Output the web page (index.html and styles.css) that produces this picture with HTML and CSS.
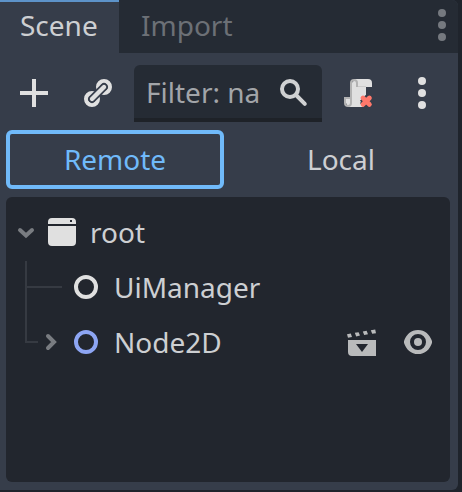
FILE: index.html
```html
<!DOCTYPE html>
<html lang="en">
<head>
<meta charset="utf-8">
<title>Scene dock</title>
<link rel="stylesheet" href="styles.css">
</head>
<body>
<main class="dock">
  <header class="tabs">
    <div class="tab active">Scene</div>
    <div class="tab">Import</div>
    <svg class="tabs-menu" viewBox="0 0 8 32"><circle cx="4" cy="4" r="4"/><circle cx="4" cy="16" r="4"/><circle cx="4" cy="28" r="4"/></svg>
  </header>
  <div class="toolbar">
    <svg class="icon" viewBox="0 0 16 16"><path d="M7 1h2v6h6v2H9v6H7V9H1V7h6z"/></svg>
    <svg class="icon link" viewBox="0 0 16 16"><circle cx="5" cy="11" r="2.900"/><circle cx="11" cy="5" r="2.900"/><path class="gap" d="M5 11l6-6"/><path d="M5 11l6-6"/></svg>
    <div class="filter">
      <span class="filter-text">Filter: na</span>
      <svg class="icon search" viewBox="0 0 16 16"><circle cx="6" cy="6" r="4"/><path d="M9 9l4.400 4.400"/></svg>
    </div>
    <svg class="icon script" viewBox="0 0 16 16"><path d="M6 1v1a1 1 0 0 0-1 1v10H4v-2H2v2l1 2h9V5h3V3a2 2 0 0 0-2-2z"/><path class="fold" d="M6 1a2 2 0 0 0-2 2v7H1v3a2 2 0 1 0 4 0V3a1 1 0 1 1 2 0v2h5V4.700H8V3a2 2 0 0 0-2-2zm-4 10h2v2a1 1 0 1 1-2 0z"/><path class="cut" d="M10.400 10.400l4 4m0-4l-4 4"/><path class="cross" d="M10.500 10.500l3.200 3.200m0-3.200l-3.200 3.200"/></svg>
    <svg class="icon more" viewBox="0 0 16 16"><circle cx="8" cy="2" r="2"/><circle cx="8" cy="8" r="2"/><circle cx="8" cy="14" r="2"/></svg>
  </div>
  <div class="switch">
    <div class="choice selected">Remote</div>
    <div class="choice">Local</div>
  </div>
  <section class="tree">
    <div class="row">
      <svg class="guide" viewBox="0 0 36 55"><path class="arrow" d="M14 25l6 5.500 6-5.500"/></svg>
      <svg class="icon node" viewBox="0 0 16 16"><path d="M3 1h10a2 2 0 0 1 2 2v1H1V3a2 2 0 0 1 2-2zM1 5h14v8a2 2 0 0 1-2 2H3a2 2 0 0 1-2-2z"/><path class="dot" d="M12 2h1v1h-1z"/></svg>
      <span class="name">root</span>
    </div>
    <div class="row">
      <svg class="guide child" viewBox="0 0 60 55"><path class="line" d="M20 1v54M20 27h36"/></svg>
      <svg class="icon node ring" viewBox="0 0 16 16"><circle cx="8" cy="8" r="5"/></svg>
      <span class="name">UiManager</span>
    </div>
    <div class="row">
      <svg class="guide child" viewBox="0 0 60 55"><path class="line" d="M20 0v27h12"/><path class="arrow" d="M42 21l6 6-6 6"/></svg>
      <svg class="icon node ring blue" viewBox="0 0 16 16"><circle cx="8" cy="8" r="5"/></svg>
      <span class="name">Node2D</span>
      <span class="actions">
        <svg class="icon" viewBox="0 0 16 16"><path fill-rule="evenodd" d="M1 7h14v8H3a2 2 0 0 1-2-2zM5 9l3 4 3-4zM.5 4.100l1.900-.3.6 1.700-2 .4zM4.400 3.400l1.900-.3.7 1.700-1.900.4zM8.400 2.700l1.900-.3.7 1.700-1.900.4zM12.400 2.100l2.200-.3.4 1.800-1.900.3z"/></svg>
        <svg class="icon eye" viewBox="0 0 16 16"><path fill-rule="evenodd" d="M8 2C4.500 2 2.100 4.400 1.100 7.300a2 2 0 0 0 0 1.400C2.100 11.600 4.500 14 8 14s5.900-2.400 6.900-5.300a2 2 0 0 0 0-1.400C13.900 4.400 11.500 2 8 2zm0 2a4 4 0 1 1 0 8 4 4 0 0 1 0-8z"/><circle cx="8" cy="8" r="2"/></svg>
      </span>
    </div>
  </section>
</main>
</body>
</html>
```
FILE: styles.css
```css
* { box-sizing: border-box; }

body {
  margin: 0;
  height: 492px;
  overflow: hidden;
  background: #1f242c;
  color: #cdcfd2;
  font: 28px/38px "Noto Sans", sans-serif;
}

svg { display: block; flex: none; }

.dock {
  display: flex;
  flex-direction: column;
  width: 458px;
  height: 490px;
  background: #363d4a;
  border-radius: 0 6px 6px 0;
  overflow: hidden;
}

.tabs {
  display: flex;
  height: 53px;
  background: #252b34;
}

.tab {
  padding: 6px 22px 0;
  color: #6c7076;
}

.tab.active {
  width: 119px;
  padding: 4px 0 0 20px;
  border-top: 2px solid #5d93c9;
  background: #363d4a;
  color: #cdcfd2;
}

.tabs-menu {
  width: 8px;
  height: 32px;
  margin: 9px 12px 0 auto;
  fill: #75797f;
}

.icon {
  width: 32px;
  height: 32px;
  fill: #e0e0e0;
}

.toolbar {
  display: flex;
  align-items: flex-start;
  height: 57px;
  margin-top: 12px;
  padding-left: 18px;
}

.toolbar .icon { margin-top: 12px; }

.link { margin-left: 32px; fill: none; stroke: #e0e0e0; stroke-width: 2.2; stroke-linecap: round; }
.link .gap { stroke: #363d4a; stroke-width: 3.9; }

.filter {
  display: flex;
  align-items: flex-start;
  justify-content: space-between;
  width: 188px;
  height: 57px;
  margin-left: 20px;
  padding: 0 12px;
  border-radius: 6px 6px 0 0;
  border-bottom: 4px solid #1e2228;
  background: #252b34;
  color: #a2a5a9;
}

.filter-text { margin-top: 8px; white-space: nowrap; }
.search { fill: none; stroke: #d0d1d2; stroke-width: 2; stroke-linecap: round; }

.script { margin-left: 20px; }
.script .fold { fill: #b3b3b3; }
.script .cut { fill: none; stroke: #363d4a; stroke-width: 4; }
.script .cross { fill: none; stroke: #ff786b; stroke-width: 2.4; stroke-linecap: round; }
.more { margin-left: 32px; }

.switch {
  display: grid;
  grid-template-columns: 218px 218px;
  gap: 8px;
  height: 59px;
  margin: 8px 6px 0;
  text-align: center;
}

.choice { padding-top: 10px; }

.selected {
  padding-top: 6px;
  border: 4px solid #70bafa;
  border-radius: 6px;
  color: #70bafa;
}

.tree {
  width: 444px;
  height: 285px;
  margin: 8px 0 0 6px;
  padding-top: 8px;
  border-radius: 6px;
  background: #22262e;
}

.row {
  display: flex;
  align-items: flex-start;
  height: 55px;
}

.row .icon { margin-top: 11px; }

.guide { width: 36px; height: 55px; margin-right: 4px; }
.guide.child { width: 60px; }
.arrow { fill: none; stroke: #797c81; stroke-width: 4; stroke-linecap: round; }
.line { fill: none; stroke: #363a42; stroke-width: 2; }
.dot { fill: #22262e; }
.ring { fill: none; stroke: #e0e0e0; stroke-width: 2; }
.blue { stroke: #8da5f3; }
.name { margin: 8px 0 0 12px; }

.actions {
  display: flex;
  gap: 24px;
  margin: 0 16px 0 auto;
}

.actions .icon { fill: #b9babb; }
```
